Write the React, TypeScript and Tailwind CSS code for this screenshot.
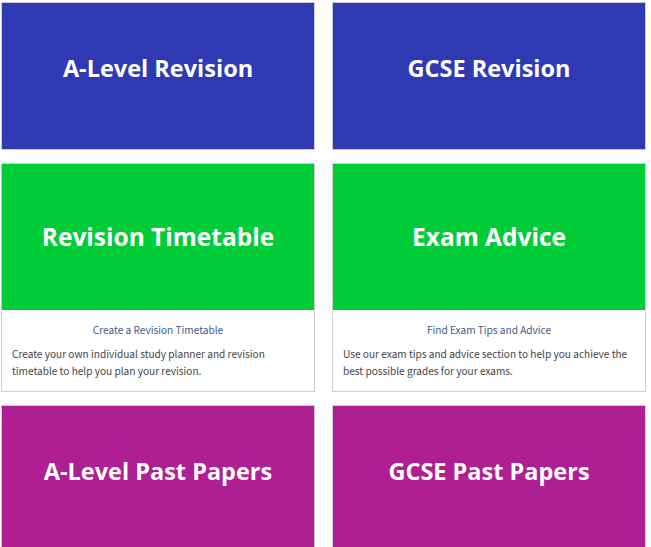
const cards = [
  { title: "A-Level Revision", color: "bg-[#2f39b2]" },
  { title: "GCSE Revision", color: "bg-[#2f39b2]" },
  {
    title: "Revision Timetable",
    color: "bg-[#00cc38]",
    link: "Create a Revision Timetable",
    text: "Create your own individual study planner and revision timetable to help you plan your revision.",
  },
  {
    title: "Exam Advice",
    color: "bg-[#00cc38]",
    link: "Find Exam Tips and Advice",
    text: "Use our exam tips and advice section to help you achieve the best possible grades for your exams.",
  },
  { title: "A-Level Past Papers", color: "bg-[#ae1f94]" },
  { title: "GCSE Past Papers", color: "bg-[#ae1f94]" },
];

export default function App() {
  return (
    <div className="h-[547px] overflow-hidden bg-white pl-[1px] pt-[2px]">
      <div className="grid grid-cols-[314px_314px] gap-x-[17px] gap-y-[13px]">
        {cards.map((c) => (
          <div key={c.title} className="border border-[#cfcfcf] bg-white">
            {c.link ? (
              <>
                <div
                  className={`flex h-[146px] items-center justify-center ${c.color} text-[24.5px] font-bold text-white [font-family:'Open_Sans',sans-serif]`}
                >
                  {c.title}
                </div>
                <div className="px-[10px] pb-[12px] pt-[11px] text-[10.1px] leading-[17px] [font-family:'Noto_Sans_CJK_KR',sans-serif]">
                  <p className="text-center text-[#3d5a87]">{c.link}</p>
                  <p className="mt-[7px] text-[#444]">{c.text}</p>
                </div>
              </>
            ) : (
              <div
                className={`flex h-[146px] items-center justify-center ${c.color} pb-[15px] text-[23.5px] font-bold text-white [font-family:'Open_Sans',sans-serif]`}
              >
                {c.title}
              </div>
            )}
          </div>
        ))}
      </div>
    </div>
  );
}
